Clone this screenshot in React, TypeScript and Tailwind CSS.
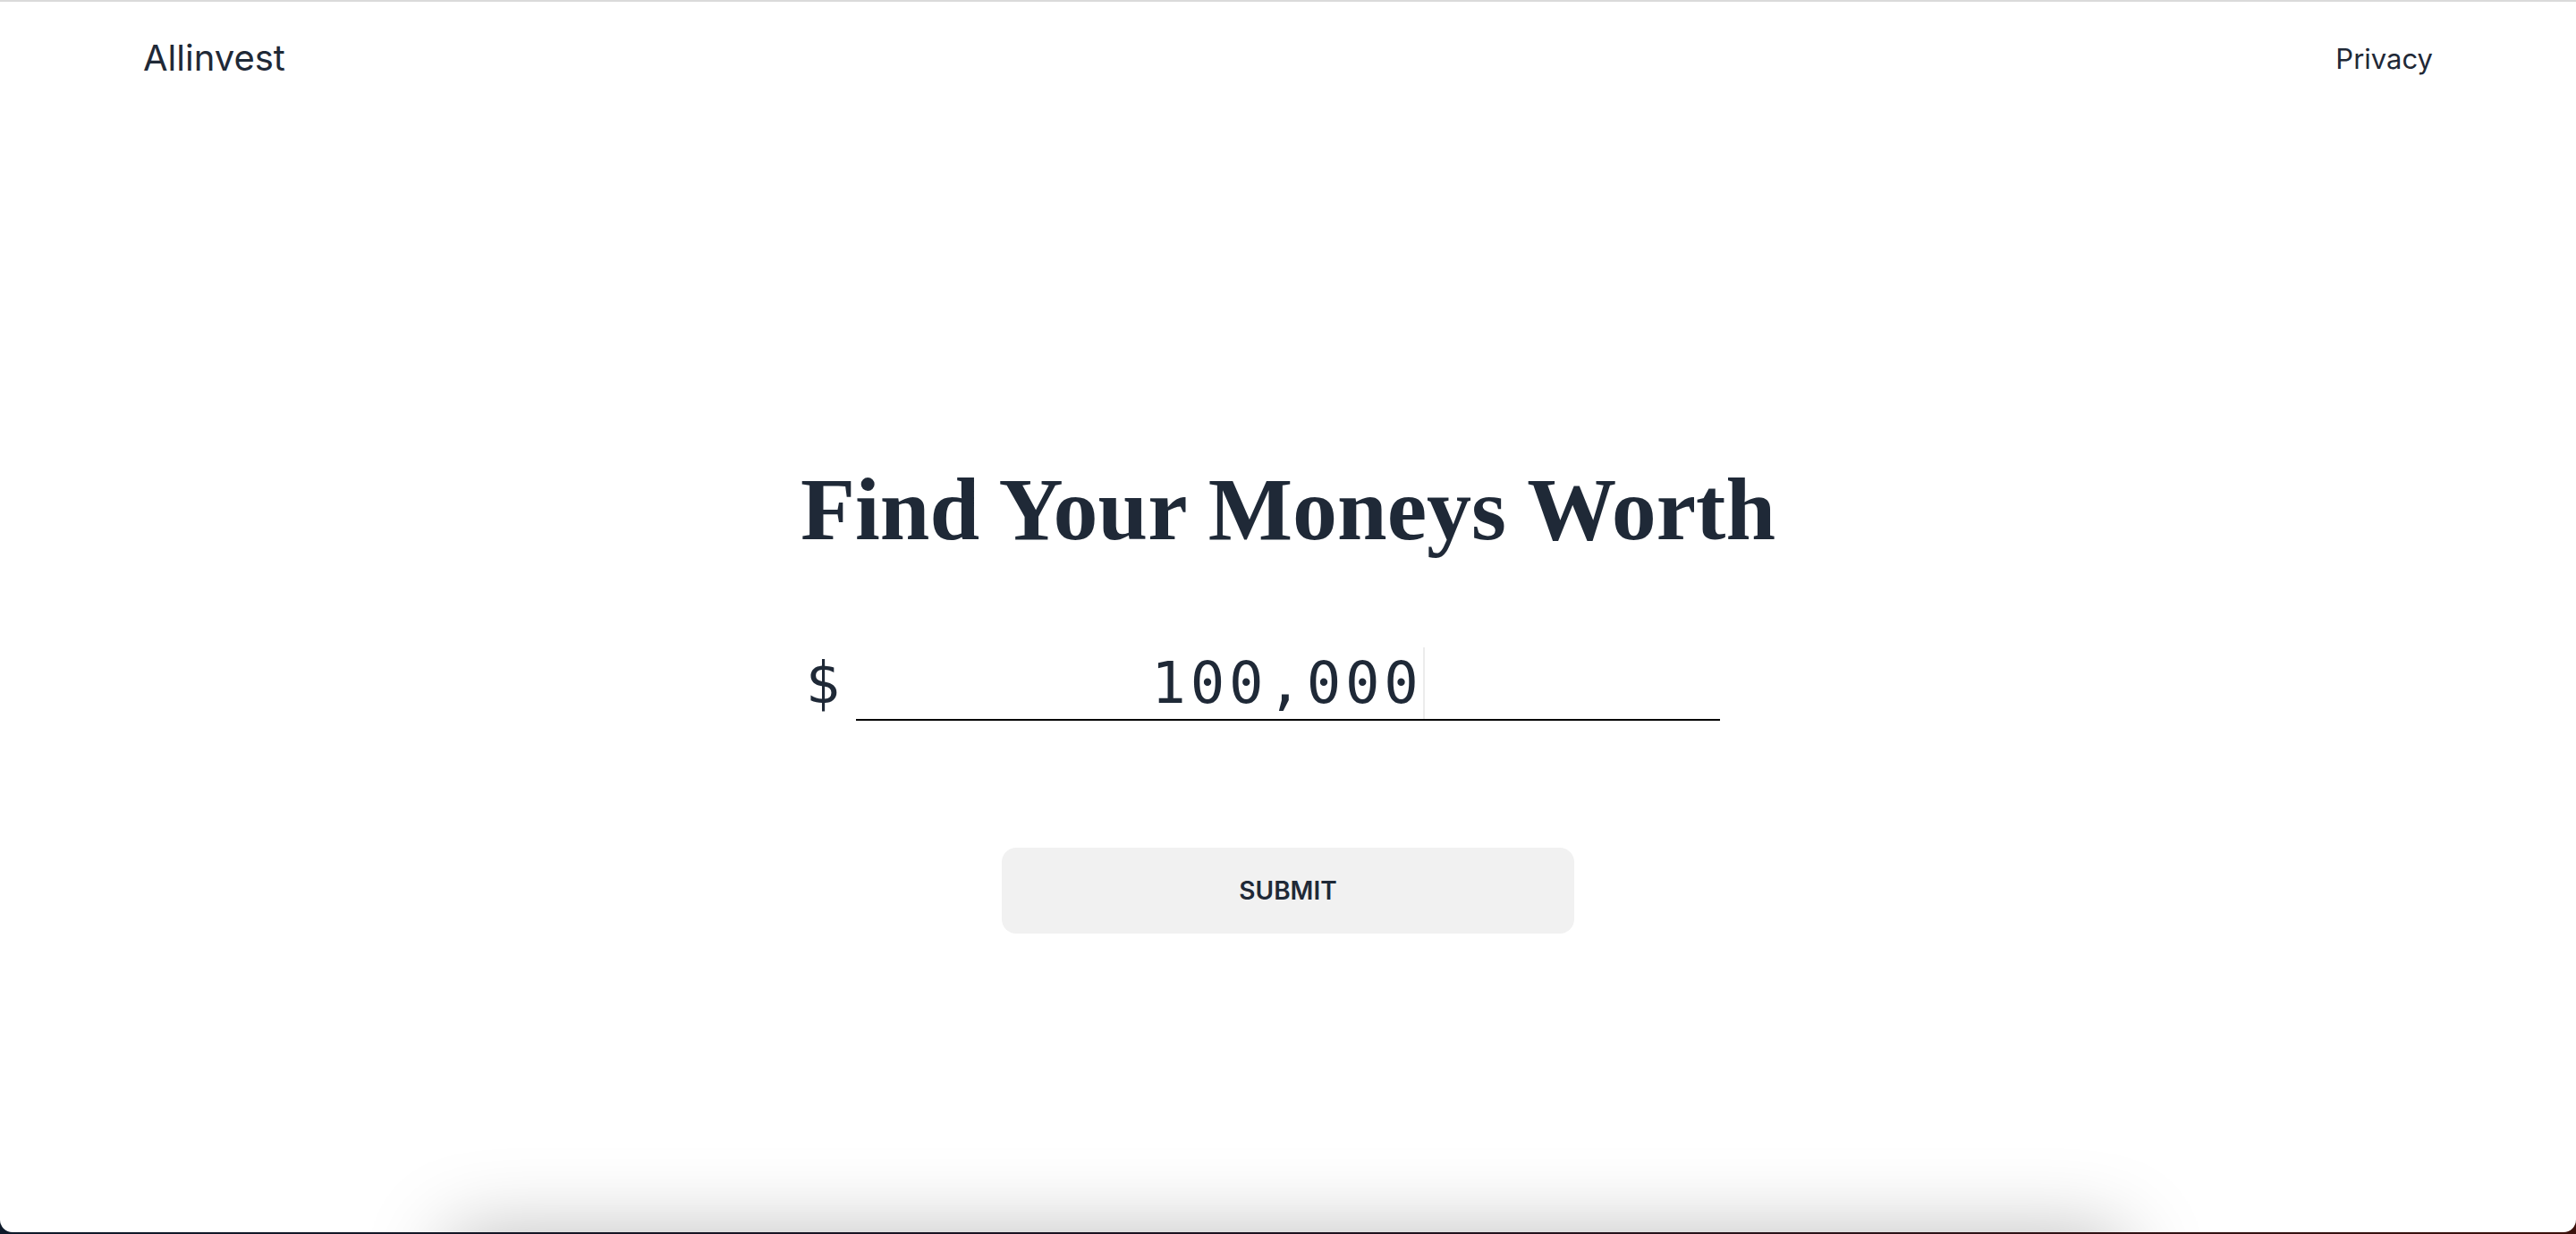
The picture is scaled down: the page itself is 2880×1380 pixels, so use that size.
export default function App() {
    return (
        <div className="h-[1380px] w-[2880px] bg-linear-to-r from-[#0e1a2a] via-[#1c1220] to-[#3c110c]">
            <div className="relative flex h-[1378px] flex-col overflow-hidden rounded-b-[14px] border-t-2 border-[#dadada] bg-white text-[#1f2937]">
                <header className="flex h-[126px] items-center justify-between px-[160px] font-['Inter',sans-serif]">
                    <a className="text-[40px] leading-none">Allinvest</a>
                    <a className="text-[31px] leading-none">Privacy</a>
                </header>

                <main className="flex flex-col items-center pt-[392px]">
                    <h1 className="font-['Liberation_Serif',serif] text-[100px] font-bold leading-none">
                        Find Your Moneys Worth
                    </h1>

                    <div className="relative mt-[104px] w-[966px] font-['DejaVu_Sans_Mono',monospace] text-[64px] leading-[80px]">
                        <span className="absolute right-full top-0 mr-[18px]">$</span>
                        <div className="flex h-[82px] justify-center border-b-2 border-black">
                            <span className="tracking-[0.075em]">100,000</span>
                            <span className="h-[80px] w-[2px] bg-[#ececec]" />
                        </div>
                    </div>

                    <button className="mt-[142px] h-[96px] w-[640px] rounded-[16px] bg-[#f1f1f1] font-['Inter',sans-serif] text-[28px] font-semibold">
                        SUBMIT
                    </button>
                </main>

                {/* card just below the fold, only its shadow shows */}
                <div className="absolute left-[500px] right-[505px] top-full h-[200px] rounded-[20px] bg-white shadow-[0_0_90px_rgba(0,0,0,0.26)]" />
            </div>
        </div>
    );
}
